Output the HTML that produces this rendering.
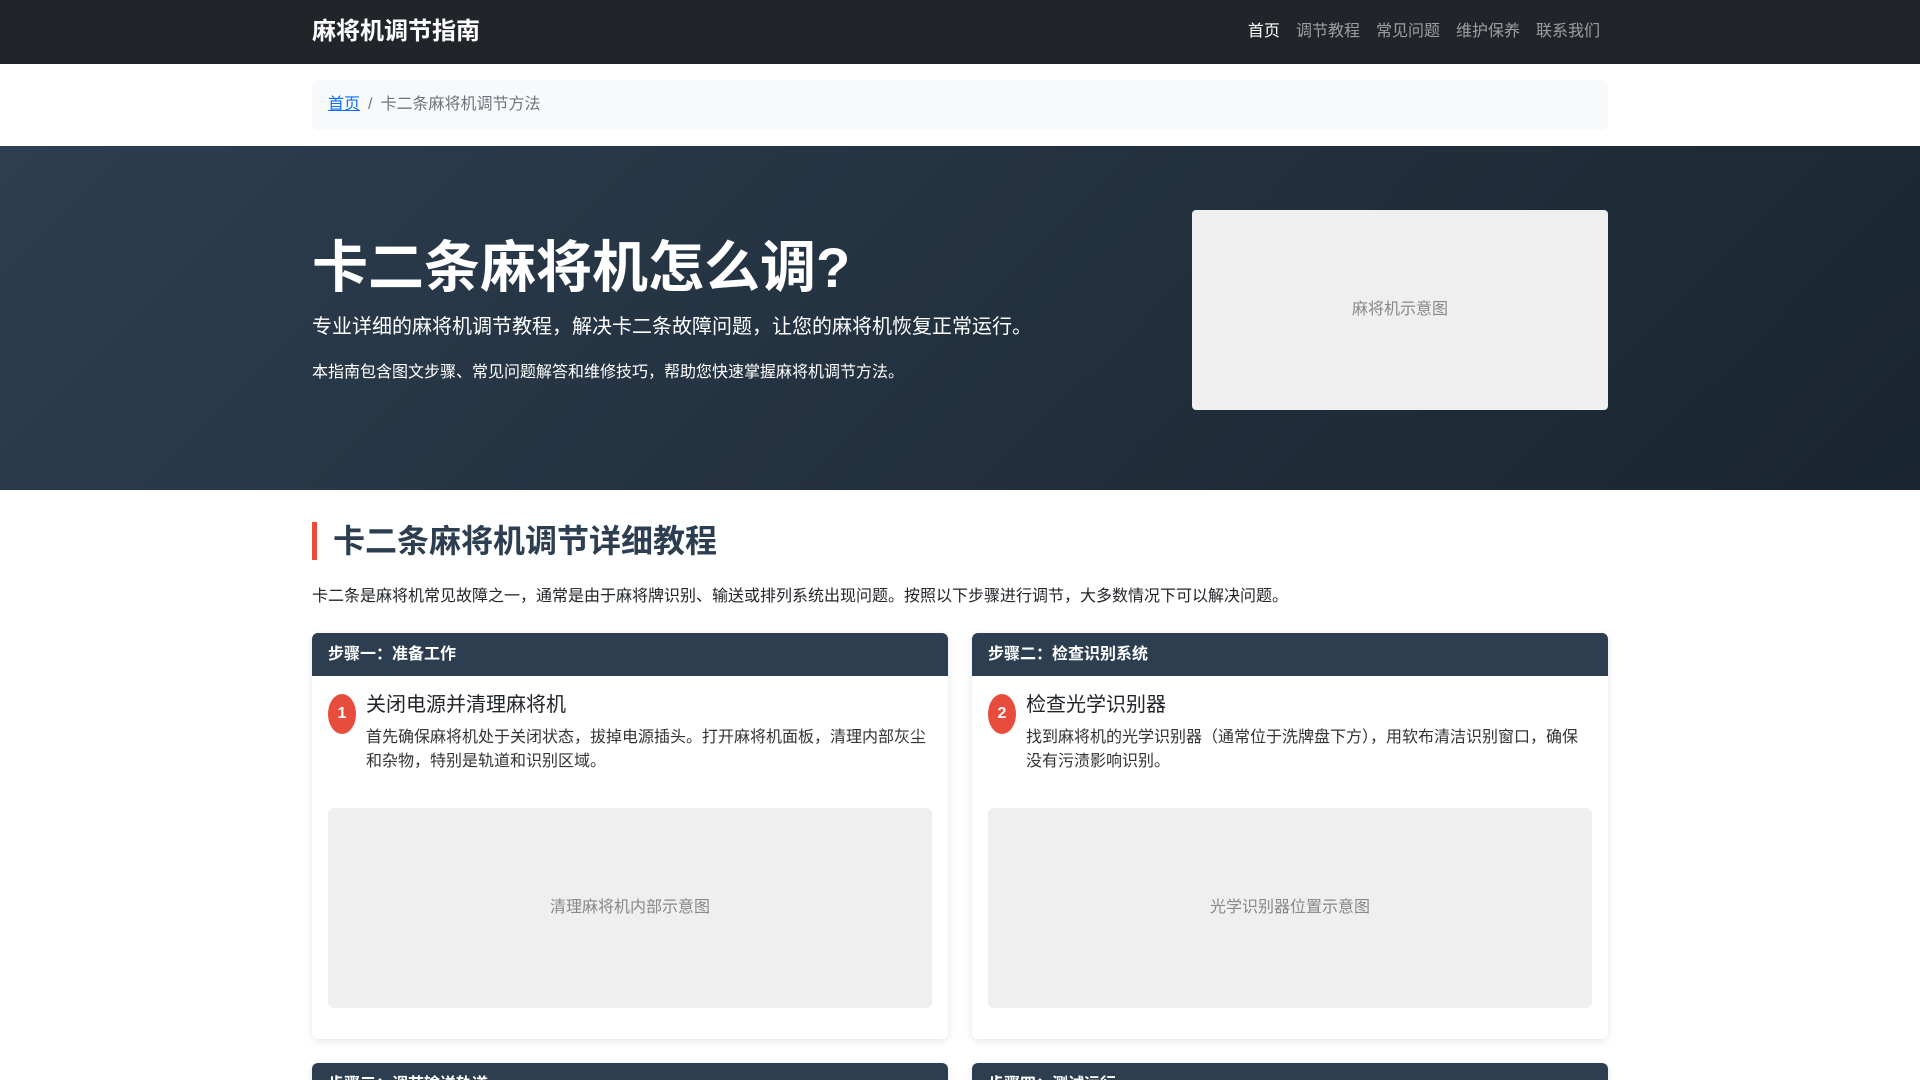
<!DOCTYPE html>
<html><head><meta charset="utf-8"><style>
*{box-sizing:border-box;margin:0;padding:0}
html,body{width:1920px;height:1080px;overflow:hidden}
body{font-family:"Liberation Sans","Noto Sans CJK SC",sans-serif;color:#212529;background:#fff;font-size:16px;line-height:1.5}
#wrap{width:1920px;height:1080px;overflow:hidden;position:relative}
.c{width:1296px;margin:0 auto;position:relative}
nav{background:#212529;height:64px}
nav .c{display:flex;align-items:center;justify-content:space-between;height:64px}
.brand{color:#fff;font-size:24px;font-weight:bold}
.links{display:flex;gap:16px;margin-right:8px}
.links a{color:rgba(255,255,255,.55);font-size:16px;text-decoration:none}
.links a.on{color:#fff}
.bc{margin-top:16px;background:#f8f9fa;border-radius:6px;height:50px;display:flex;align-items:center;padding:0 16px;color:#6c757d}
.bc a{color:#0d6efd;text-decoration:underline}
.bc span{margin:0 8px}
.hero{margin-top:16px;height:344px;background:linear-gradient(135deg,#2c3e50,#1a252f);color:#fff}
.hero .c{height:344px}
h1{position:absolute;top:88px;left:0;font-size:56px;font-weight:bold;line-height:1.2}
.lead{position:absolute;top:166px;left:0;font-size:20px}
.sm{position:absolute;top:215px;left:0;font-size:16px}
.ph{background:#efefef;color:#888;display:flex;align-items:center;justify-content:center;border-radius:6px}
.himg{position:absolute;left:880px;top:64px;width:416px;height:200px;border-radius:4px}
h2{margin-top:32px;border-left:5px solid #e74c3c;padding-left:16px;font-size:32px;color:#2c3e50;font-weight:bold;line-height:38px}
.intro{margin-top:25px}
.row{display:flex;gap:24px;margin-top:24px}
.card{flex:1;border-radius:6px;box-shadow:0 2px 8px rgba(0,0,0,.1);height:406px;overflow:hidden}
.ch{background:#2c3e50;color:#fff;font-weight:bold;height:43px;line-height:43px;padding-left:16px}
.cb{padding:16px}
.st{display:flex;gap:10px}
.num{flex:0 0 28px;height:40px;border-radius:50%;background:#e74c3c;color:#fff;font-weight:bold;display:flex;align-items:center;justify-content:center;margin-top:2px}
.st h5{font-size:20px;font-weight:normal;line-height:1.5;margin-top:-2px}
.st p{color:#333;margin-top:6px;line-height:24px}
.cimg{margin-top:34px;height:200px}
.row2{margin-top:24px}
.row2 .card{height:20px;border-radius:6px 6px 0 0}
</style></head><body><div id="wrap">
<nav><div class="c"><div class="brand">麻将机调节指南</div><div class="links"><a class="on">首页</a><a>调节教程</a><a>常见问题</a><a>维护保养</a><a>联系我们</a></div></div></nav>
<div class="c"><div class="bc"><a>首页</a><span>/</span>卡二条麻将机调节方法</div></div>
<div class="hero"><div class="c">
<h1>卡二条麻将机怎么调?</h1>
<div class="lead">专业详细的麻将机调节教程，解决卡二条故障问题，让您的麻将机恢复正常运行。</div>
<div class="sm">本指南包含图文步骤、常见问题解答和维修技巧，帮助您快速掌握麻将机调节方法。</div>
<div class="ph himg">麻将机示意图</div>
</div></div>
<div class="c">
<h2>卡二条麻将机调节详细教程</h2>
<p class="intro">卡二条是麻将机常见故障之一，通常是由于麻将牌识别、输送或排列系统出现问题。按照以下步骤进行调节，大多数情况下可以解决问题。</p>
<div class="row">
<div class="card"><div class="ch">步骤一：准备工作</div><div class="cb"><div class="st"><div class="num">1</div><div><h5>关闭电源并清理麻将机</h5><p>首先确保麻将机处于关闭状态，拔掉电源插头。打开麻将机面板，清理内部灰尘和杂物，特别是轨道和识别区域。</p></div></div><div class="ph cimg">清理麻将机内部示意图</div></div></div>
<div class="card"><div class="ch">步骤二：检查识别系统</div><div class="cb"><div class="st"><div class="num">2</div><div><h5>检查光学识别器</h5><p>找到麻将机的光学识别器（通常位于洗牌盘下方），用软布清洁识别窗口，确保没有污渍影响识别。</p></div></div><div class="ph cimg">光学识别器位置示意图</div></div></div>
</div>
<div class="row row2">
<div class="card"><div class="ch">步骤三：调节输送轨道</div></div>
<div class="card"><div class="ch">步骤四：测试运行</div></div>
</div>
</div>
</div></body></html>
